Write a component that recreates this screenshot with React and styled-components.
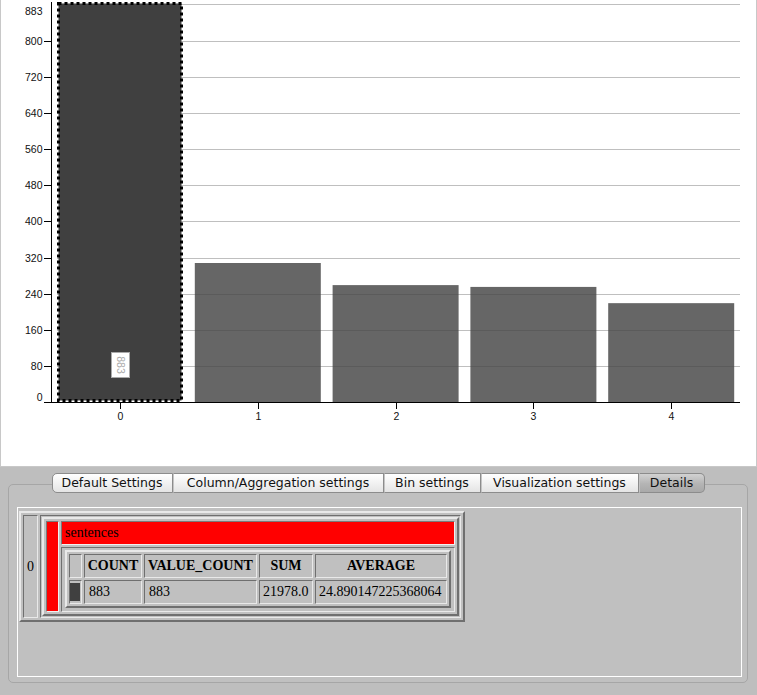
import React from 'react'
import styled, { createGlobalStyle } from 'styled-components'

const GlobalStyle = createGlobalStyle`
  html, body {
    margin: 0;
    padding: 0;
    background: #bebebe;
  }
  body {
    width: 757px;
    height: 695px;
    overflow: hidden;
  }
`

const Page = styled.div`
  display: flex;
  flex-direction: column;
  width: 757px;
  height: 695px;
`

const ChartPanel = styled.div`
  height: 466px;
  background: #fff;
  border: 1px solid #c8c8c8;
  border-top: none;
  overflow: hidden;
`

const BottomPanel = styled.div`
  flex: 1;
  display: flex;
  flex-direction: column;
  padding: 6px 9px 12px 8px;
  background: #bebebe;
`

const TabRow = styled.div`
  position: relative;
  z-index: 1;
  display: flex;
  justify-content: center;
  height: 20px;
  margin-bottom: -9px;
`

const Tab = styled.div`
  box-sizing: border-box;
  width: ${p => p.$width}px;
  height: 20px;
  border: 1px solid #8c8c8c;
  border-left: ${p => (p.$first ? '1px solid #8c8c8c' : '1px solid #c4c4c4')};
  border-radius: ${p => (p.$first ? '5px 0 0 5px' : p.$last ? '0 5px 5px 0' : '0')};
  background: ${p =>
    p.$selected
      ? 'linear-gradient(#d2d2d2, #b4b4b4 55%, #a9a9a9)'
      : 'linear-gradient(#ffffff, #f2f2f2 50%, #e4e4e4)'};
  font-family: "DejaVu Sans", "Lucida Grande", sans-serif;
  font-size: 12.5px;
  line-height: 18px;
  text-align: center;
  color: #111;
  white-space: nowrap;
`

const Frame = styled.div`
  flex: 1;
  display: flex;
  border: 1px solid #a6a6a6;
  border-radius: 5px;
  background: #c0c0c0;
  padding: 22px 5px 5px 8px;
`

const ContentBox = styled.div`
  flex: 1;
  border: 1px solid #ffffff;
  padding: 3px 0 0 1px;
  display: flex;
  align-items: flex-start;
`

const BevelTable = styled.table`
  border-collapse: separate;
  border-spacing: 2px;
  border: 2px solid;
  border-color: #e9e9e9 #6f6f6f #6f6f6f #e9e9e9;
  font-family: "Liberation Serif", "Times New Roman", serif;
  font-size: 14px;
  line-height: 16px;
  color: #000;
`

const Cell = styled.td`
  box-sizing: border-box;
  border: 1px solid;
  border-color: #6f6f6f #e9e9e9 #e9e9e9 #6f6f6f;
  padding: ${p => p.$pad || '3px 3px'};
  background: ${p => p.$bg || 'transparent'};
  text-align: ${p => p.$align || 'left'};
  vertical-align: ${p => p.$valign || 'middle'};
  width: ${p => (p.$w ? `${p.$w}px` : 'auto')};
  white-space: nowrap;
`

const RedCell = styled(Cell)`
  background: #ff0000;
  border-color: #7a7a7a #f0f0f0 #f0f0f0 #7a7a7a;
`

const HeadCell = styled(Cell).attrs({ as: 'th' })`
  font-weight: bold;
  text-align: center;
`

const Swatch = styled.div`
  width: 10px;
  height: 18px;
  background: #404040;
`

const tabs = [
  { label: 'Default Settings', width: 121 },
  { label: 'Column/Aggregation settings', width: 211 },
  { label: 'Bin settings', width: 97 },
  { label: 'Visualization settings', width: 158 },
  { label: 'Details', width: 66, selected: true },
]

const BASE = 402
const K = 0.4513
const yOf = v => BASE - v * K
const values = [883, 308, 259, 255, 219]
const ticks = [0, 80, 160, 240, 320, 400, 480, 560, 640, 720, 800]
const barX = i => 57 + 137.8 * i
const BAR_W = 126
const labelFont = { fontFamily: '"Liberation Sans", Arial, sans-serif', fontSize: 10.5 }

const Chart = () => (
  <svg width="757" height="466" viewBox="1 0 757 466">
    {values.slice(1).map((v, idx) => {
      const i = idx + 1
      return <rect key={i} x={barX(i)} y={yOf(v)} width={BAR_W} height={BASE - yOf(v)} fill="#666666" />
    })}
    {[...ticks.slice(1), 883].map(t => (
      <line key={t} x1="57" x2="740" y1={Math.round(yOf(t)) + 0.5} y2={Math.round(yOf(t)) + 0.5}
        stroke="rgba(73,73,73,0.35)" strokeWidth="1" />
    ))}
    <rect x="58.5" y="3.5" width="123" height="397" fill="#404040"
      stroke="#000" strokeWidth="3" strokeDasharray="3 3" />
    <rect x="111.5" y="352.5" width="18" height="25" fill="#fff" stroke="#aaa" />
    <text x="120.5" y="365" transform="rotate(90 120.5 365)" textAnchor="middle"
      dominantBaseline="central" fill="#aaa" style={labelFont}>883</text>
    <line x1="51.5" x2="51.5" y1="2" y2="403" stroke="#000" />
    <line x1="51" x2="740" y1="402.5" y2="402.5" stroke="#000" />
    {ticks.map(t => {
      const y = Math.round(yOf(t)) + 0.5
      return (
        <g key={t}>
          <line x1="44" x2="51" y1={y} y2={y} stroke="#000" />
          <text x="42.5" y={t === 0 ? 401 : y + 3.8} textAnchor="end" fill="#111" style={labelFont}>{t}</text>
        </g>
      )
    })}
    <text x="42.5" y="15" textAnchor="end" fill="#111" style={labelFont}>883</text>
    {values.map((v, i) => {
      const cx = Math.round(barX(i) + BAR_W / 2) + 0.5
      return (
        <g key={i}>
          <line x1={cx} x2={cx} y1="402" y2="409" stroke="#000" />
          <text x={cx} y="420" textAnchor="middle" fill="#111" style={labelFont}>{i}</text>
        </g>
      )
    })}
  </svg>
)

const DetailsTable = () => (
  <BevelTable>
    <tbody>
      <tr>
        <Cell $pad="0 3px 0 3px" $w={15}>0</Cell>
        <Cell $pad="1px">
          <BevelTable>
            <tbody>
              <tr>
                <RedCell rowSpan={2} $w={13} $pad="0" />
                <RedCell $pad="3px 3px 3px 3px">sentences</RedCell>
              </tr>
              <tr>
                <Cell $pad="2px 3px 3px 3px">
                  <BevelTable>
                    <tbody>
                      <tr>
                        <HeadCell $w={12} $pad="3px 0" />
                        <HeadCell $w={58} $pad="3px 1px">COUNT</HeadCell>
                        <HeadCell $w={113} $pad="3px 1px">VALUE_COUNT</HeadCell>
                        <HeadCell $w={54} $pad="3px 1px">SUM</HeadCell>
                        <HeadCell $w={132} $pad="3px 1px">AVERAGE</HeadCell>
                      </tr>
                      <tr>
                        <Cell $pad="2px 1px 2px 0"><Swatch /></Cell>
                        <Cell $pad="3px 3px 3px 4px">883</Cell>
                        <Cell $pad="3px 3px 3px 4px">883</Cell>
                        <Cell $pad="3px 2px 3px 3px">21978.0</Cell>
                        <Cell $pad="3px 2px 3px 3px">24.890147225368064</Cell>
                      </tr>
                    </tbody>
                  </BevelTable>
                </Cell>
              </tr>
            </tbody>
          </BevelTable>
        </Cell>
      </tr>
    </tbody>
  </BevelTable>
)

export default function App() {
  return (
    <Page>
      <GlobalStyle />
      <ChartPanel>
        <Chart />
      </ChartPanel>
      <BottomPanel>
        <TabRow>
          {tabs.map((t, i) => (
            <Tab key={t.label} $width={t.width} $first={i === 0} $last={i === tabs.length - 1} $selected={t.selected}>
              {t.label}
            </Tab>
          ))}
        </TabRow>
        <Frame>
          <ContentBox>
            <DetailsTable />
          </ContentBox>
        </Frame>
      </BottomPanel>
    </Page>
  )
}
